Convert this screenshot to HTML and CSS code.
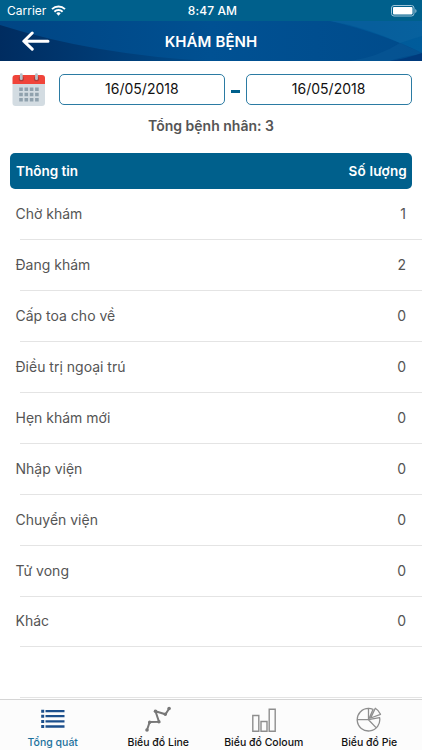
FILE: index.html
```html
<!DOCTYPE html>
<html lang="vi">
<head>
    <meta charset="UTF-8">
    <title>Khám bệnh</title>
    <link rel="stylesheet" href="styles.css">
</head>
<body>
    <div class="status">
        <div class="carrier">
            <span>Carrier</span>
            <svg width="15" height="11" viewBox="0 0 15 11" fill="none" stroke="#fff" stroke-width="1.9">
                <path d="M1 4.1a9.4 9.4 0 0 1 13 0"/>
                <path d="M3.4 6.7a5.9 5.9 0 0 1 8.2 0"/>
                <path d="M5.3 8.3a3.2 3.2 0 0 1 4.4 0L7.5 10.7z" fill="#fff" stroke="none"/>
            </svg>
        </div>
        <span class="time">8:47 AM</span>
        <svg class="battery" width="26" height="12" viewBox="0 0 26 12">
            <rect x="0.5" y="0.5" width="22.5" height="10.5" rx="2.5" fill="none" stroke="#9cc3d8"/>
            <rect x="2" y="2" width="19.5" height="7.5" rx="1" fill="#fff"/>
            <path d="M24.3 4v4q1.2-.6 1.2-2t-1.2-2z" fill="#9cc3d8"/>
        </svg>
    </div>

    <div class="header">
        <svg class="header-bg" width="422" height="40" viewBox="0 0 422 40">
            <defs>
                <linearGradient id="base" x1="0" x2="1">
                    <stop offset="0" stop-color="#004584"/>
                    <stop offset="0.5" stop-color="#005091"/>
                    <stop offset="1" stop-color="#005c9b"/>
                </linearGradient>
                <linearGradient id="dark" x1="0" x2="1">
                    <stop offset="0" stop-color="#002c60"/>
                    <stop offset="1" stop-color="#004b8a"/>
                </linearGradient>
                <linearGradient id="right" x1="0" x2="1">
                    <stop offset="0" stop-color="#005193"/>
                    <stop offset="1" stop-color="#004b8b"/>
                </linearGradient>
            </defs>
            <rect width="422" height="40" fill="url(#base)"/>
            <path d="M0 4Q95 34 210 40H0z" fill="url(#dark)"/>
            <path d="M210 0H330Q382 12 422 32V40H210z" fill="url(#right)"/>
            <path d="M350 40Q378 36 400 22L422 32V33Q400 36 390 40z" fill="#0a5a98" opacity="0.5"/>
            <path d="M390 40Q408 37 422 32V40z" fill="#003a7c"/>
            <path d="M330 0H422V15L400 22Q365 6 330 0z" fill="#1c70a8" opacity="0.25"/>
        </svg>
        <svg class="back" width="28" height="20" viewBox="0 0 28 20" fill="none" stroke="#fff" stroke-width="3" stroke-linecap="round" stroke-linejoin="round">
            <path d="M26 10.2H2M10.2 2L1.8 10.2l8.4 8"/>
        </svg>
        <h1>KHÁM BỆNH</h1>
    </div>

    <div class="filter">
        <svg class="calendar" width="33" height="34" viewBox="0 0 33 34">
            <path d="M.5 11H33V30q0 3-3 3H3.5q-3 0-3-3z" fill="#d3dce2"/>
            <path d="M.5 11V5q0-3 3-3H30q3 0 3 3v6z" fill="#f0443a"/>
            <g fill="#b33c38">
                <circle cx="9.3" cy="5.7" r="2.6"/>
                <circle cx="24.5" cy="5.7" r="2.6"/>
            </g>
            <path d="M9.3 1.7v4M24.5 1.7v4" stroke="#b5bfc7" stroke-width="2.8" stroke-linecap="round"/>
            <path d="M7.2 16.2h20M7.2 21.5h20M7.2 26.7h20" stroke="#8fa1ad" stroke-width="3.6" stroke-dasharray="3.6 1.7"/>
        </svg>
        <div class="date">16/05/2018</div>
        <span class="dash"></span>
        <div class="date">16/05/2018</div>
    </div>

    <p class="total">Tổng bệnh nhân: 3</p>

    <div class="table-head">
        <span>Thông tin</span>
        <span>Số lượng</span>
    </div>
    <ul class="list">
        <li><span>Chờ khám</span><span>1</span></li>
        <li><span>Đang khám</span><span>2</span></li>
        <li><span>Cấp toa cho về</span><span>0</span></li>
        <li><span>Điều trị ngoại trú</span><span>0</span></li>
        <li><span>Hẹn khám mới</span><span>0</span></li>
        <li><span>Nhập viện</span><span>0</span></li>
        <li><span>Chuyển viện</span><span>0</span></li>
        <li><span>Tử vong</span><span>0</span></li>
        <li><span>Khác</span><span>0</span></li>
        <li></li>
    </ul>

    <div class="tabs">
        <a class="tab active">
            <svg width="26" height="26" viewBox="0 0 26 26" fill="none" stroke="#1c4f8c">
                <path d="M5.5 5.2H24.5M5.5 10.2H24.5M5.5 15.4H24.5M5.5 20.5H24.5" stroke-width="2.3"/>
                <path d="M1.2 5.2h3M1.2 10.2h3M1.2 15.4h3M1.2 20.5h3" stroke-width="3"/>
            </svg>
            <span>Tổng quát</span>
        </a>
        <a class="tab">
            <svg width="26" height="26" viewBox="0 0 26 26" fill="#777" stroke="#777">
                <path d="M2 24L4.7 16l9.3-.3L10.5 5.3l10 3L24.3 2.3" fill="none" stroke-width="2"/>
                <g stroke="none">
                    <circle cx="2" cy="24" r="1.8"/>
                    <circle cx="4.7" cy="16.2" r="1.7"/>
                    <circle cx="13.9" cy="15.8" r="1.7"/>
                    <circle cx="10.5" cy="5.3" r="1.8"/>
                    <circle cx="20.3" cy="8.3" r="1.7"/>
                    <circle cx="24.1" cy="2.5" r="1.8"/>
                </g>
            </svg>
            <span>Biểu đồ Line</span>
        </a>
        <a class="tab">
            <svg width="26" height="26" viewBox="0 0 26 26" fill="none" stroke="#8e8e8e" stroke-width="1.4">
                <path d="M1.8 9.5h6v15.8h-6zM10 15.5h6v9.8h-6zM18.2 3.2h6v22.1h-6z"/>
            </svg>
            <span>Biểu đồ Coloum</span>
        </a>
        <a class="tab">
            <svg width="26" height="26" viewBox="0 0 26 26" fill="none" stroke="#8e8e8e" stroke-width="1.3" stroke-linejoin="round">
                <path d="M12.5 2.400A11.3 11.3 0 1 0 23.600 11.600L12.5 13.700zM12.5 13.700H1.2M12.5 13.700l7.800 8.200"/>
                <path d="M12.5 2.400q2.400 0 4.500 1L12.5 13.700M14.700 12L19.300 2.300q3.600 2.200 5.200 6z"/>
            </svg>
            <span>Biểu đồ Pie</span>
        </a>
    </div>
</body>
</html>
```

FILE: styles.css
```css
* {
    box-sizing: border-box;
}

body {
    margin: 0;
    height: 750px;
    display: flex;
    flex-direction: column;
    overflow: hidden;
    background: #fff;
    color: #555;
    font-family: Inter, Roboto, sans-serif;
}

.status {
    height: 21px;
    display: grid;
    grid-template-columns: 1fr auto 1fr;
    align-items: center;
    padding: 0 5px 0 7px;
    background: #00608c;
    color: #fff;
    font-size: 12px;
}

.carrier {
    display: flex;
    align-items: center;
    gap: 5px;
}

.time {
    padding-left: 1px;
    font-weight: 500;
    letter-spacing: 0.1px;
}

.battery {
    justify-self: end;
}

.header {
    position: relative;
    height: 40px;
    display: flex;
    align-items: center;
    justify-content: center;
}

.header-bg {
    position: absolute;
    top: 0;
    left: 0;
}

.back {
    position: absolute;
    top: 10px;
    left: 22px;
}

.header h1 {
    position: relative;
    margin: 0;
    color: #fff;
    font-size: 15px;
    font-weight: 600;
    letter-spacing: 0.1px;
}

.filter {
    display: flex;
    align-items: center;
    height: 33px;
    margin: 12px 10.5px 0 12px;
}

.calendar {
    margin-right: 14px;
}

.date {
    flex: 1;
    height: 31px;
    border: 1px solid #2b7ba3;
    border-radius: 5px;
    color: #111;
    font-size: 14px;
    line-height: 28px;
    text-align: center;
}

.dash {
    width: 9px;
    height: 3px;
    margin: 3px 6px 0;
    background: #00608c;
}

.total {
    margin: 11px 0 0;
    font-size: 14px;
    font-weight: 600;
    line-height: 18px;
    text-align: center;
}

.table-head {
    display: flex;
    justify-content: space-between;
    align-items: center;
    height: 36px;
    margin: 18px 10px 0;
    padding: 0 5px 0 6px;
    border-radius: 5px;
    background: #00608c;
    color: #fff;
    font-size: 13.5px;
    font-weight: 600;
}

.table-head span:last-child {
    letter-spacing: 0.2px;
}

.list {
    flex: 1;
    margin: 0;
    padding: 0;
    list-style: none;
    font-size: 14px;
}

.list li {
    display: flex;
    justify-content: space-between;
    align-items: center;
    height: 50.95px;
    padding: 0 16px 2px 15.5px;
    background: linear-gradient(#e4e4e4, #e4e4e4) 20px 100% / 100% 1px no-repeat;
}

.tabs {
    display: flex;
    height: 51px;
    border-top: 1px solid #d5d5d5;
    background: #fcfcfc;
}

.tab {
    flex: 1;
    display: flex;
    flex-direction: column;
    align-items: center;
    padding-top: 6px;
    color: #111;
    font-size: 10.5px;
    font-weight: 500;
    white-space: nowrap;
}

.tab span {
    margin-top: 4px;
    line-height: 14px;
}

.tab.active {
    color: #1c719d;
}
```
